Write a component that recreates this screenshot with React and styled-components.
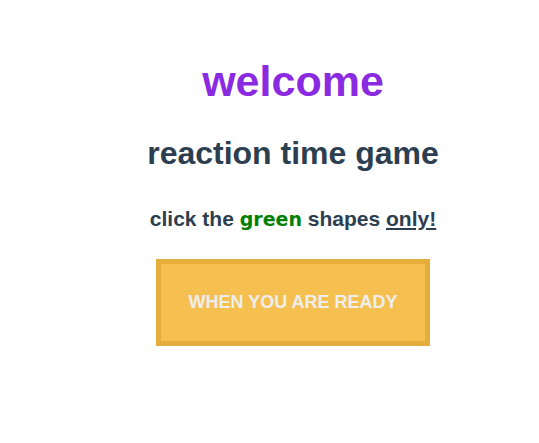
import styled, { createGlobalStyle } from "styled-components";

const GlobalStyle = createGlobalStyle`
  body {
    margin: 0;
    background: #fff;
    font-family: "Liberation Sans", Arial, sans-serif;
  }
`;

function App() {
  return (
    <>
      <GlobalStyle />
      <Page>
        <Welcome>welcome</Welcome>
        <Title>reaction time game</Title>
        <Hint>
          click the <Green>green</Green> shapes <Only>only!</Only>
        </Hint>
        <ReadyBtn>when you are ready</ReadyBtn>
      </Page>
    </>
  );
}

const Page = styled.div`
  display: flex;
  flex-direction: column;
  align-items: center;
  padding-left: 47px;
  padding-top: 57px;
  color: #2c3e50;
`;

const Welcome = styled.h1`
  margin: 0;
  font-size: 43px;
  line-height: 48px;
  font-weight: bold;
  color: #8a2be2;
`;

const Title = styled.h2`
  margin: 30px 0 0;
  font-size: 32px;
  line-height: 36px;
  font-weight: bold;
`;

const Hint = styled.p`
  margin: 36px 0 0;
  font-size: 21px;
  line-height: 24px;
  font-weight: bold;
`;

const Green = styled.span`
  color: green;
  font-family: "Comic Sans MS", "DejaVu Sans", cursive;
  font-size: 19px;
`;

const Only = styled.span`
  text-decoration: underline;
`;

const ReadyBtn = styled.button`
  margin-top: 28px;
  width: 274px;
  height: 87px;
  background: #f6c050;
  border: 5px solid #e5ae3c;
  color: #eeeeee;
  font-family: "Liberation Sans", Arial, sans-serif;
  font-size: 18px;
  font-weight: bold;
  text-transform: uppercase;
  cursor: pointer;
`;

export default App;
